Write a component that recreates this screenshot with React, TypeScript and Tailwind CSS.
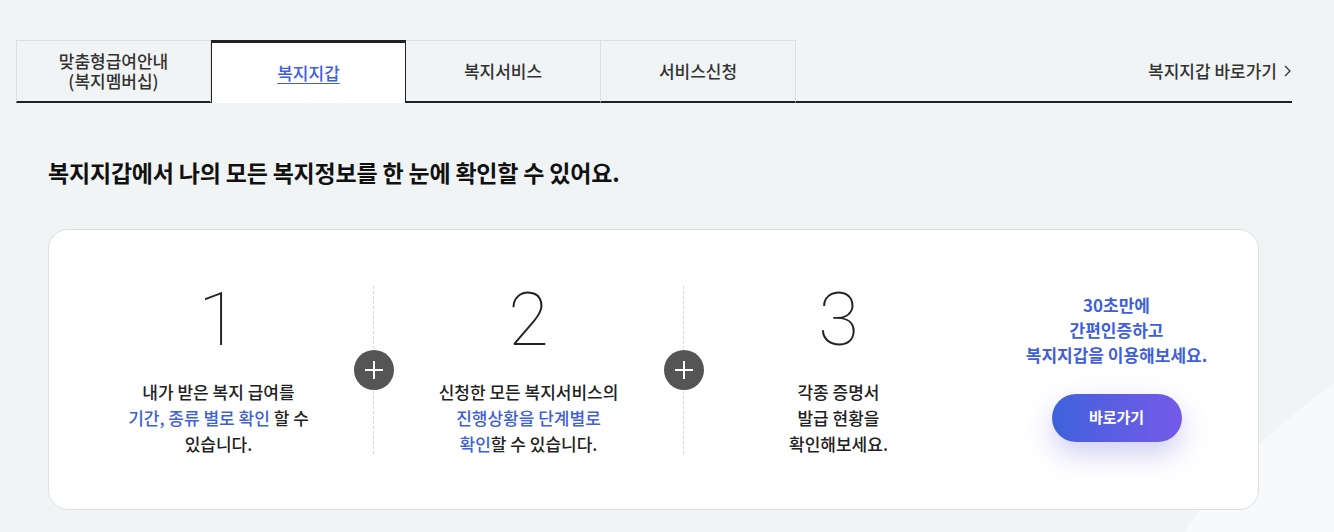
import React from 'react';

const tabs = [
  { id: 'member', label: ['맞춤형급여안내', '(복지멤버십)'] },
  { id: 'wallet', label: ['복지지갑'] },
  { id: 'service', label: ['복지서비스'] },
  { id: 'apply', label: ['서비스신청'] },
];

const PlusDivider = () => (
  <div className="relative h-[168px] w-0 border-l border-dashed border-[#d9d9d9]">
    <div className="absolute left-1/2 top-1/2 -translate-x-1/2 -translate-y-1/2 w-10 h-10 rounded-full bg-[#555555] flex items-center justify-center">
      <svg width="20" height="20" viewBox="0 0 20 20" fill="none" stroke="white" strokeWidth="2">
        <path d="M10 1v18M1 10h18" />
      </svg>
    </div>
  </div>
);

const Step: React.FC<{ num: string; children: React.ReactNode }> = ({ num, children }) => (
  <div className="w-[309px] flex flex-col items-center">
    <div className="h-[74px] text-[74px] leading-none font-thin text-[#222] font-['Roboto',sans-serif]">{num}</div>
    <p className="mt-[22px] text-[17px] leading-[26px] font-medium text-[#222] text-center">{children}</p>
  </div>
);

export default function App() {
  const active = 'wallet';
  return (
    <div className="relative min-h-[532px] overflow-hidden bg-[#f1f4f5] font-['Noto_Sans_CJK_KR','Noto_Sans',sans-serif]">
      {/* 배경 장식 */}
      <div className="absolute left-[1065px] top-[270px] w-[1260px] h-[1260px] rounded-full bg-[#f7f9fa]" />

      <div className="relative pt-10">
        {/* 탭 */}
        <div className="ml-4 w-[1276px] flex">
          {tabs.map((tab, i) => {
            const isActive = tab.id === active;
            return isActive ? (
              <div key={tab.id} className="w-[195px] h-[63px] bg-white border-t-[3px] border-x border-[#222] flex items-center justify-center">
                <span className="text-[17px] font-medium text-[#3f5fdc] underline underline-offset-[3px]">{tab.label[0]}</span>
              </div>
            ) : (
              <div
                key={tab.id}
                className={`w-[195px] h-[63px] border-t border-r border-[#dcdfe1] border-b-2 border-b-[#222] flex flex-col items-center justify-center text-[17px] leading-[20px] font-medium text-[#333] ${i === 0 ? 'border-l' : ''}`}
              >
                {tab.label.map((l) => (
                  <span key={l}>{l}</span>
                ))}
              </div>
            );
          })}
          <div className="flex-1 h-[63px] border-b-2 border-[#222] flex items-center justify-end">
            <span className="text-[17px] font-medium text-[#333]">복지지갑 바로가기</span>
            <svg className="ml-[7px] mr-[1px]" width="7" height="12" viewBox="0 0 7 12" fill="none" stroke="#333" strokeWidth="1.3">
              <path d="M1 1l5 5-5 5" />
            </svg>
          </div>
        </div>

        {/* 제목 */}
        <h2 className="mt-[54px] ml-12 text-[23px] leading-[30px] font-bold tracking-[-0.2px] text-[#111]">
          복지지갑에서 나의 모든 복지정보를 한 눈에 확인할 수 있어요.
        </h2>

        {/* 카드 */}
        <div className="mt-[42px] ml-12 w-[1211px] h-[281px] bg-white border border-[#dddfe1] rounded-[20px] flex items-center pl-[15px] pr-[18px]">
          <Step num="1">
            내가 받은 복지 급여를<br />
            <span className="text-[#3f5fdc]">기간, 종류 별로 확인</span> 할 수<br />
            있습니다.
          </Step>
          <PlusDivider />
          <Step num="2">
            신청한 모든 복지서비스의<br />
            <span className="text-[#3f5fdc]">진행상황을 단계별로</span><br />
            <span className="text-[#3f5fdc]">확인</span>할 수 있습니다.
          </Step>
          <PlusDivider />
          <Step num="3">
            각종 증명서<br />
            발급 현황을<br />
            확인해보세요.
          </Step>
          <div className="flex-1 flex flex-col items-center mb-[6px]">
            <p className="text-[17px] leading-[25px] font-semibold text-[#3f5fdc] text-center">
              30초만에<br />
              간편인증하고<br />
              복지지갑을 이용해보세요.
            </p>
            <button className="mt-[27px] w-[130px] h-12 rounded-full bg-gradient-to-r from-[#3d62da] to-[#7459e8] text-white text-[15px] font-bold shadow-[0_12px_28px_rgba(88,80,210,0.28)]">
              바로가기
            </button>
          </div>
        </div>
      </div>
    </div>
  );
}
